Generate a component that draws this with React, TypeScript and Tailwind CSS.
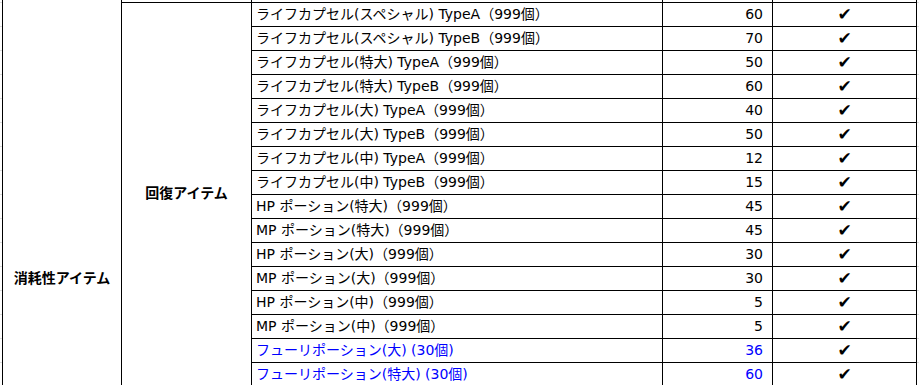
import React from "react";

type Row = { name: string; num: string; blue?: boolean };

const rows: Row[] = [
  { name: "ライフカプセル(スペシャル) TypeA（999個）", num: "60" },
  { name: "ライフカプセル(スペシャル) TypeB（999個）", num: "70" },
  { name: "ライフカプセル(特大) TypeA（999個）", num: "50" },
  { name: "ライフカプセル(特大) TypeB（999個）", num: "60" },
  { name: "ライフカプセル(大) TypeA（999個）", num: "40" },
  { name: "ライフカプセル(大) TypeB（999個）", num: "50" },
  { name: "ライフカプセル(中) TypeA（999個）", num: "12" },
  { name: "ライフカプセル(中) TypeB（999個）", num: "15" },
  { name: "HP ポーション(特大)（999個）", num: "45" },
  { name: "MP ポーション(特大)（999個）", num: "45" },
  { name: "HP ポーション(大)（999個）", num: "30" },
  { name: "MP ポーション(大)（999個）", num: "30" },
  { name: "HP ポーション(中)（999個）", num: "5" },
  { name: "MP ポーション(中)（999個）", num: "5" },
  { name: "フューリポーション(大) (30個)", num: "36", blue: true },
  { name: "フューリポーション(特大) (30個)", num: "60", blue: true },
];

const font = { fontFamily: '"DejaVu Sans", "Noto Sans CJK JP", sans-serif' };

export default function App() {
  return (
    <div
      className="w-[919px] h-[385px] overflow-hidden bg-white text-black text-[14px] flex"
      style={font}
    >
      {/* left gray ticks */}
      <div className="w-[2px] shrink-0 flex flex-col">
        <div className="h-[2px] shrink-0" />
        {rows.map((_, i) => (
          <div key={i} className="h-[24px] shrink-0 border-t border-[#dddddd]" />
        ))}
      </div>
      {/* column 1 */}
      <div className="w-[120px] shrink-0 border-l border-r border-black flex flex-col items-center">
        <div className="pt-[270px] leading-[17px] font-bold whitespace-nowrap">消耗性アイテム</div>
      </div>
      {/* column 2 */}
      <div className="w-[130px] shrink-0 border-r border-black flex flex-col">
        <div className="h-[2px] shrink-0" />
        <div className="h-[381px] shrink-0 border-t border-black flex items-center justify-center">
          <span className="font-bold leading-[17px] whitespace-nowrap">回復アイテム</span>
        </div>
      </div>
      {/* rows */}
      <div className="flex flex-col shrink-0">
        <div className="h-[2px] flex shrink-0">
          <div className="w-[411px] border-r border-black" />
          <div className="w-[110px] border-r border-black" />
          <div className="w-[144px] border-r border-black" />
        </div>
        {rows.map((r, i) => (
          <div key={i} className="h-[24px] flex shrink-0 border-t border-black">
            <div
              className={`w-[411px] border-r border-black pl-[4px] flex items-center whitespace-nowrap leading-[17px] ${
                r.blue ? "text-[#0000ff]" : ""
              }`}
            >
              {r.name}
            </div>
            <div
              className={`w-[110px] border-r border-black pr-[9px] flex items-center justify-end leading-[17px] ${
                r.blue ? "text-[#0000ff]" : ""
              }`}
            >
              {r.num}
            </div>
            <div className="w-[144px] border-r border-black flex items-center justify-center text-[17px] leading-[17px]">
              ✔
            </div>
          </div>
        ))}
      </div>
      {/* right gray ticks */}
      <div className="w-[2px] shrink-0 flex flex-col">
        <div className="h-[2px] shrink-0" />
        {rows.map((_, i) => (
          <div key={i} className="h-[24px] shrink-0 border-t border-[#dddddd]" />
        ))}
      </div>
    </div>
  );
}
